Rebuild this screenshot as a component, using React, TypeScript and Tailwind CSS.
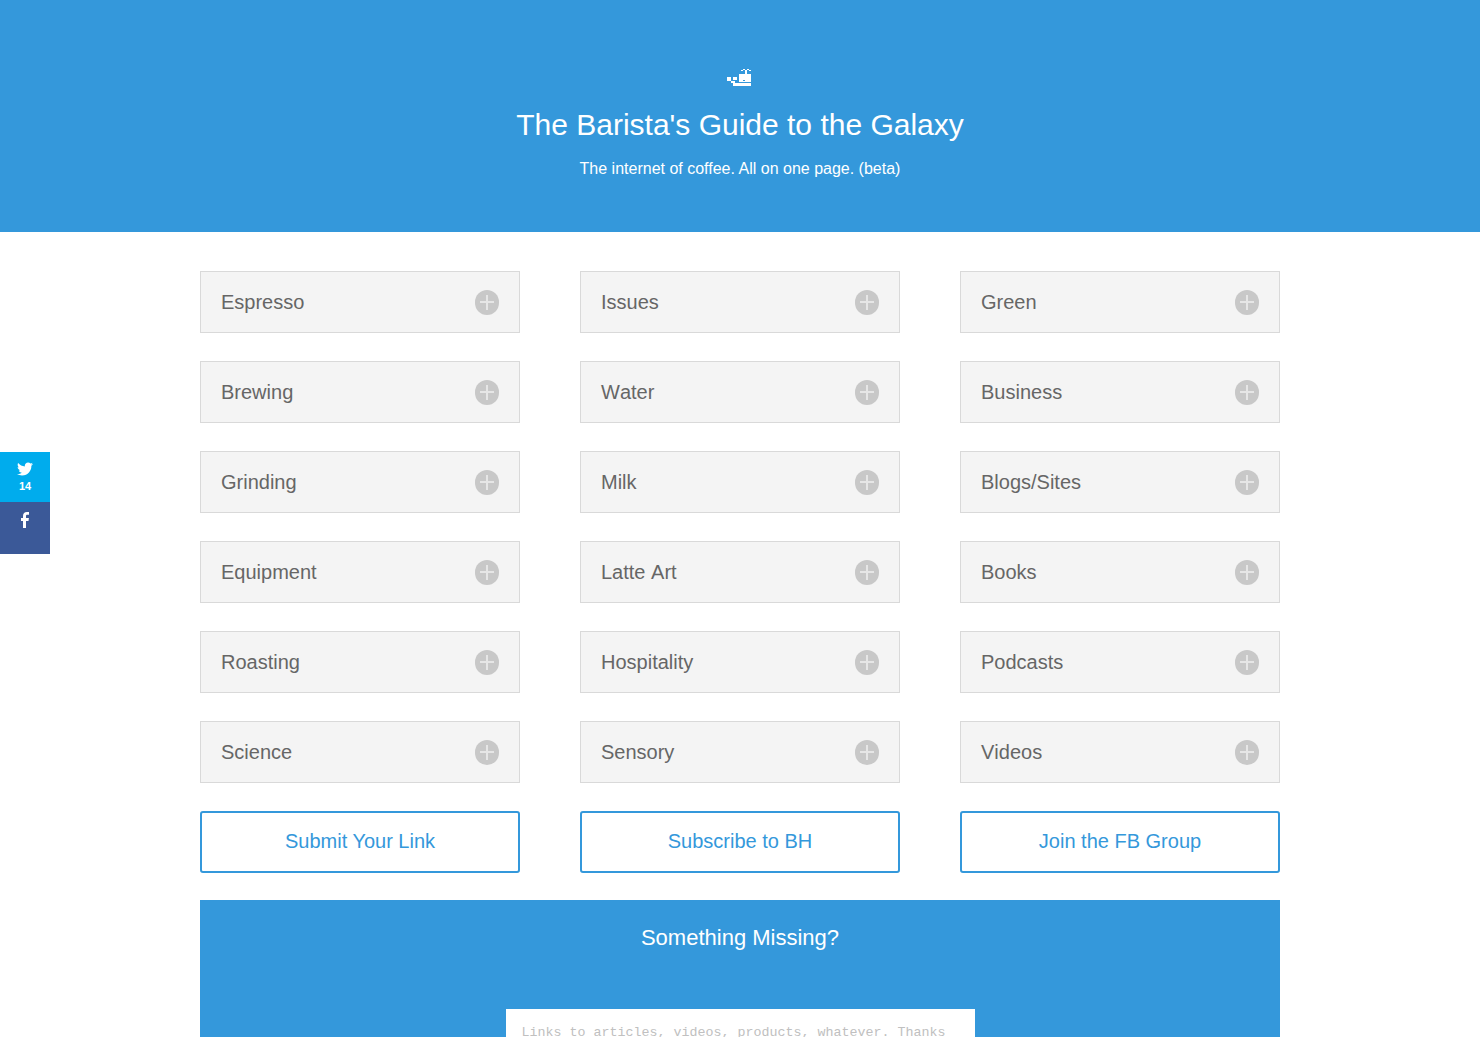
import React from "react";
import { FaTwitter } from "react-icons/fa";

const columns = [
  ["Espresso", "Brewing", "Grinding", "Equipment", "Roasting", "Science"],
  ["Issues", "Water", "Milk", "Latte Art", "Hospitality", "Sensory"],
  ["Green", "Business", "Blogs/Sites", "Books", "Podcasts", "Videos"],
];

const links = ["Submit Your Link", "Subscribe to BH", "Join the FB Group"];

const Whale = () => (
  <svg width="24" height="17" viewBox="0 0 24 17" fill="#fff" fillRule="evenodd" shapeRendering="crispEdges" className="mr-[2px] block">
    <path d="M0 8h4v4H0zM6 8h4v3H6zM4 12h4v2H4zM6 14h18v3H6zM12 5h12v8H12zM16 11h2v1h-2zM18 3h2v2h-2zM14 1h2v1h-2zM16 0h2v1h-2zM18 1h2v2h-2zM20 0h2v1h-2zM22 1h2v1h-2z" />
  </svg>
);

const Row = ({ label }: { label: string }) => (
  <div className="flex h-[62px] items-center justify-between border border-[#d9d9d9] bg-[#f4f4f4] px-5 text-[20px] text-[#666] [font-kerning:none]">
    <span>{label}</span>
    <span className="relative mt-[18px] h-[25px] w-6 self-start rounded-full bg-[#c8c8c8]">
      <span className="absolute left-[5px] top-[11px] h-0.5 w-3.5 bg-[#e6e6e6]" />
      <span className="absolute left-[11px] top-[5px] h-[15px] w-0.5 bg-[#e6e6e6]" />
    </span>
  </div>
);

export default function App() {
  return (
    <div className="relative h-[1037px] overflow-hidden bg-white font-['Liberation_Sans',Arial,sans-serif]">
      <header className="flex h-[232px] flex-col items-center bg-[#3498db] pt-[69px] text-white">
        <Whale />
        <h1 className="mt-[19px] text-[30px] leading-[40px]">The Barista's Guide to the Galaxy</h1>
        <p className="mt-[12px] text-base leading-6">The internet of coffee. All on one page. (beta)</p>
      </header>

      <div className="absolute left-0 top-[452px] w-[50px] text-white">
        <div className="flex h-[50px] flex-col items-center bg-[#00aced] pt-[9px]">
          <FaTwitter className="h-4 w-4" />
          <span className="mt-[2px] text-[11px] font-bold leading-[14px]">14</span>
        </div>
        <div className="flex h-[52px] justify-center bg-[#3b5998] pt-[10px]">
          <svg width="8" height="16" viewBox="0 0 8 16" fill="#fff">
            <path d="M5 16V9h2.5l.4-3H5V4.2C5 3.4 5.2 2.8 6.4 2.8H8V.1C7.7.1 6.8 0 5.8 0 3.6 0 2 1.4 2 3.9V6H0v3h2v7z" />
          </svg>
        </div>
      </div>

      <main className="mx-auto w-[1080px] pt-[39px]">
        <div className="grid grid-cols-3 gap-x-[60px]">
          {columns.map((col) => (
            <div key={col[0]} className="flex flex-col gap-7">
              {col.map((label) => (
                <Row key={label} label={label} />
              ))}
            </div>
          ))}
        </div>
        <div className="mt-7 grid grid-cols-3 gap-x-[60px]">
          {links.map((label) => (
            <a
              key={label}
              className="flex h-[62px] items-center justify-center rounded-[3px] border-2 border-[#3498db] pb-0.5 text-[20px] text-[#3498db]"
            >
              {label}
            </a>
          ))}
        </div>
        <section className="mt-[27px] flex h-[200px] flex-col items-center bg-[#3498db] pt-[24px] text-white">
          <h2 className="text-[22px] leading-[28px]">Something Missing?</h2>
          <div className="mt-[57px] w-[469px] bg-white px-4 pt-[17px] pb-10 font-['Liberation_Mono',monospace] text-[13.33px] leading-[13px] whitespace-nowrap text-[#c0c0c0]">
            Links to articles, videos, products, whatever. Thanks
          </div>
        </section>
      </main>
    </div>
  );
}
